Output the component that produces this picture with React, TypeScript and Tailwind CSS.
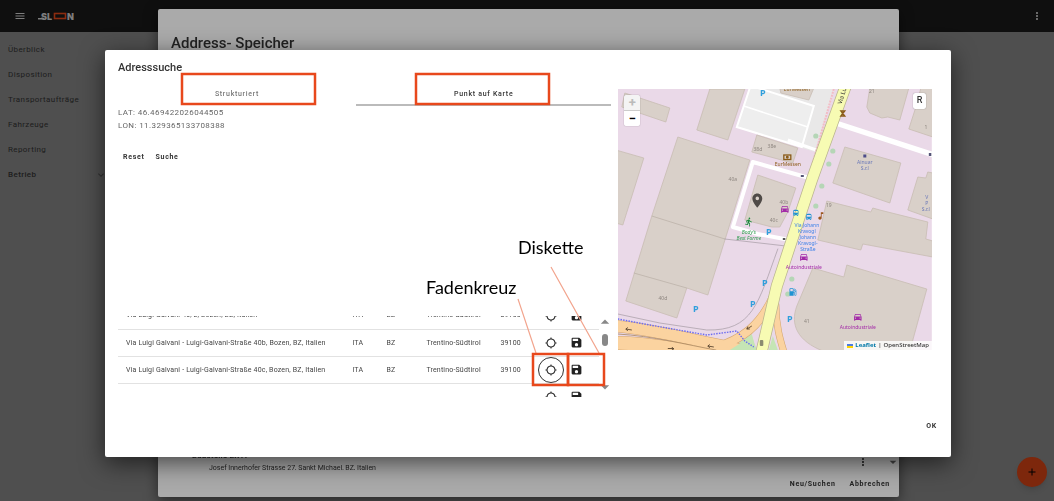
import React, { useState } from 'react'
import {
  MdAdd,
  MdArrowDropDown,
  MdArrowDropUp,
  MdDirectionsBus,
  MdDirectionsCar,
  MdDirectionsRun,
  MdExpandMore,
  MdLocalGasStation,
  MdLocationOn,
  MdLocationSearching,
  MdMenu,
  MdMoreVert,
  MdMusicNote,
  MdSave,
} from 'react-icons/md'

interface Address {
  id: number
  label: string
  country: string
  province: string
  region: string
  zip: string
}

const navItems = ['Überblick', 'Disposition', 'Transportaufträge', 'Fahrzeuge', 'Reporting', 'Betrieb']

const addresses: Address[] = [
  { id: 1, label: 'Via Luigi Galvani 40/b, Bozen, BZ, Italien', country: 'ITA', province: 'BZ', region: 'Trentino-Südtirol', zip: '39100' },
  { id: 2, label: 'Via Luigi Galvani - Luigi-Galvani-Straße 40b, Bozen, BZ, Italien', country: 'ITA', province: 'BZ', region: 'Trentino-Südtirol', zip: '39100' },
  { id: 3, label: 'Via Luigi Galvani - Luigi-Galvani-Straße 40c, Bozen, BZ, Italien', country: 'ITA', province: 'BZ', region: 'Trentino-Südtirol', zip: '39100' },
  { id: 4, label: '', country: '', province: '', region: '', zip: '' },
]

const buildings = [
  '7,4 52,19 48,33 4,18',
  '92,0 79,41 110,51 127,0',
  '60,48 132,71 90,206 69,199 59,229 8,212 34,127',
  '-2,61 26,69 5,136 -2,134',
  '162,-1 196,-1 191,11 163,4',
  '139,46 180,59 175,74 134,63',
  '140,86 178,99 170,123 162,138 154,138 127,131',
  '252,-1 249,18 252,24 264,29 270,28 282,31 291,-1',
  '303,-1 299,15 291,40 315,48 315,-1',
  '227,58 283,74 272,114 215,94',
  '300,88 308,89 310,83 315,84 315,130 290,121',
  '209,112 253,123 255,119 262,121 310,133 308,150 315,152 315,168 245,155 243,161 200,151',
]

const trees = [[198, 47], [215, 62], [211, 75], [204, 97], [198, 117], [174, 190], [170, 205]]
const parkings = [[145, 4], [151, 143], [147, 194], [135, 215], [78, 220], [172, 230]]

const houseNumbers: [number, number, string][] = [
  [140, 62, '38d'],
  [154, 59, '38e'],
  [115, 92, '40a'],
  [166, 115, '40b'],
  [156, 133, '40c'],
  [45, 211, '40d'],
  [211, 118, '19'],
  [189, 234, '41'],
  [308, 40, '1'],
  [254, 4, '21'],
]

const StreetMap: React.FC = () => (
  <svg
    viewBox="0 0 314 261"
    preserveAspectRatio="xMidYMid slice"
    className="block h-full w-full font-['Noto_Sans',sans-serif]"
    textAnchor="middle"
    fontSize="5"
  >
    <rect width="314" height="261" fill="#ead9e8" />
    <polygon points="131,0 217,0 197,63 118,38" fill="#e9e8e8" />
    <polygon points="133,-4 119,38 184,58 196,17 137,-2" fill="#eeeeee" stroke="#fff" strokeWidth="2" />
    <path d="M126 17 190 38" stroke="#fff" strokeWidth="1.5" />

    {/* Buildings */}
    {buildings.map((points) => (
      <polygon key={points} points={points} fill="#d9d0c9" stroke="#c8bcb3" strokeWidth="0.8" />
    ))}
    <path
      d="M195 179 226 188 229 176 309 200 292 262H205C180 252 172 236 179 217Z"
      fill="#d9d0c9"
      stroke="#c8bcb3"
      strokeWidth="0.8"
    />
    <path d="M34 127 107 150M16 184 69 199" stroke="#bdb2aa" strokeWidth="0.8" />

    {/* Green areas and the main road in the south */}
    <path d="M110 261 134 245 138 261ZM151 261 155 247 160 261Z" fill="#c5e5b5" />
    <g fill="none" strokeLinecap="round">
      <path d="M-4 237C35 240 70 250 101 256S140 266 150 275" stroke="#d3a56e" strokeWidth="12" />
      <path d="M-4 254C30 254 70 262 120 270" stroke="#d3a56e" strokeWidth="14" />
      <path d="M97 259C124 250 142 238 156 207" stroke="#d3a56e" strokeWidth="9" />
      <path d="M158 216C158 236 162 250 167 266" stroke="#d3a56e" strokeWidth="7" />
      <path d="M-4 237C35 240 70 250 101 256S140 266 150 275" stroke="#fbd3a0" strokeWidth="11" />
      <path d="M-4 254C30 254 70 262 120 270" stroke="#fbd3a0" strokeWidth="13" />
      <path d="M97 259C124 250 142 238 156 207" stroke="#fbd3a0" strokeWidth="8" />
      <path d="M158 216C158 236 162 250 167 266" stroke="#fbd3a0" strokeWidth="6" />
      <path d="M0 245C35 247 70 256 98 261" stroke="#a88760" strokeWidth="0.8" />
      <path d="M0 225 42 234 89 241C135 242 140 215 160 160M107 150 168 157" stroke="#a59ba3" strokeWidth="0.7" />
      <path d="M167 180 158 205" stroke="#a59ba3" strokeWidth="0.7" />
    </g>
    <path d="M112 261 134 247 139 261Z" fill="#c5e5b5" />
    <path d="M0 230 32 236 89 246 119 242 127 252 136 258" fill="none" stroke="#6c6cf0" strokeWidth="1.4" strokeDasharray="1.5 1.2" />

    {/* Side streets */}
    <g fill="none" stroke="#fff" strokeLinejoin="round">
      <path d="M170 51 204 63" strokeWidth="3" />
      <path d="M195 90 135 73 115 138 140 145 172 151" strokeWidth="4" />
      <path d="M218 34 316 66" strokeWidth="5.5" />
    </g>

    {/* Via Luigi Galvani */}
    <path d="M216 0 192 84" stroke="#f3bcc5" strokeWidth="2" strokeDasharray="2 1" />
    <path d="M229 -6C213 38 204 63 194 91L181 130 159 197 143 266" fill="none" stroke="#b9b58e" strokeWidth="12" />
    <path d="M229 -6C213 38 204 63 194 91L181 130 159 197 143 266" fill="none" stroke="#f7fbb3" strokeWidth="10.5" />

    {trees.map(([x, y]) => (
      <circle key={`${x}-${y}`} cx={x} cy={y} r="2.6" fill="#b5d6b6" />
    ))}
    {parkings.map(([x, y]) => (
      <text key={`${x}-${y}`} x={x} y={y + 3} fontSize="9" fontWeight="700" fill="#2f9fdc">P</text>
    ))}
    <g fill="#8d857f">
      {houseNumbers.map(([x, y, label]) => (
        <text key={label} x={x} y={y}>{label}</text>
      ))}
    </g>

    {/* Road arrows */}
    <g fill="none" stroke="#5a4630" strokeWidth="0.9">
      <path d="M14 241 8 240M10 238.500 8 240 10 242" />
      <path d="M50 259.500H56M54 258 56 260 54 261" />
      <path d="M96 258 90 257M92 255.500 90 257 92 259" />
      <path d="M134 237 129 240M130 237.500 129 240 132 240" />
    </g>
    <rect x="183" y="86" width="3" height="2" fill="#555577" />
    <rect x="165" y="149" width="2.500" height="2" fill="#555" />
    <rect x="311" y="64" width="2.500" height="3" fill="#555577" />
    <rect x="142" y="251" width="3.500" height="6" rx="1" fill="#8b8b70" />

    {/* Points of interest */}
    <g fill="none" stroke="#8a5a16" strokeWidth="1.3">
      <rect x="166" y="66" width="7" height="4.500" />
      <circle cx="169.500" cy="68.200" r="0.8" />
      <path d="M223 22H227L223 27H227Z" />
    </g>
    <text x="170" y="77" fill="#8a5a16">EurMessen</text>
    <text x="179" y="2" fill="#8a5a16">EurMessen</text>
    <rect x="245.500" y="65.500" width="3" height="3" fill="#4c4c8a" />
    <g fill="#6a78b8">
      <text x="247" y="75">Ainuar</text>
      <text x="247" y="81">S.r.l</text>
      <text x="309" y="110">V</text>
      <text x="309" y="116">P</text>
      <text x="308" y="122">S.r.l</text>
    </g>
    <text transform="translate(222 14) rotate(-72)" textAnchor="start" x="-1" y="2" fontSize="6" fill="#333">Via Lu</text>
    <g fill="#3f82e8">
      <text x="189" y="138">Via Johann</text>
      <text x="189" y="144">Kravogl</text>
      <text x="190" y="150">Johann</text>
      <text x="190" y="156">Kravogl-</text>
      <text x="190" y="162">Straße</text>
    </g>
    <g fill="#2d9a4d" fontStyle="italic">
      <text x="131" y="145">Body’s</text>
      <text x="131" y="151">Best Forme</text>
    </g>
    <g fill="#a32aa8">
      <text x="186" y="180">Autoindustriale</text>
      <text x="240" y="240">Autoindustriale</text>
    </g>
    <MdDirectionsCar x={181} y={163} size={10} color="#a32aa8" />
    <MdDirectionsCar x={235} y={223} size={10} color="#a32aa8" />
    <MdDirectionsCar x={162} y={115} size={10} color="#a32aa8" />
    <MdDirectionsBus x={174} y={120} size={8} color="#1f93d2" />
    <MdDirectionsBus x={187} y={124} size={8} color="#1f93d2" />
    <MdLocalGasStation x={170} y={198} size={10} color="#1f93d2" />
    <MdMusicNote x={198} y={122} size={10} color="#9a571a" />
    <MdDirectionsRun x={126} y={128} size={10} color="#1c8b3c" />
    <MdLocationOn x={131} y={103} size={17} color="#4f4a47" />
  </svg>
)

const Logo: React.FC = () => (
  <svg viewBox="0 0 38 10" className="h-[10px] w-[38px] font-[Inter,sans-serif]" fontSize="9" fontWeight="900" fill="#7d7d7d">
    <path d="M0 7H6V8.500H0Z" />
    <text x="3" y="8.500">SL</text>
    <rect x="16.500" y="2.500" width="11" height="5" fill="none" stroke="#8c2c10" strokeWidth="1.600" />
    <text x="29" y="8.500">N</text>
  </svg>
)

const App: React.FC = () => {
  const [activeTab, setActiveTab] = useState<'structured' | 'map'>('map')
  const [selectedId, setSelectedId] = useState(3)

  const tabClass = (tab: 'structured' | 'map') =>
    activeTab === tab ? 'border-[#bbbbbb] text-[#333]' : 'border-transparent text-[#777]'

  return (
    <div className="flex min-h-screen flex-col bg-[#4f4f4f] font-[Roboto,sans-serif]">
      {/* Header */}
      <header className="flex h-8 items-center gap-3 bg-[#0f0f0f] px-[14px] text-[#7d7d7d]">
        <button aria-label="Menü">
          <MdMenu className="size-3" />
        </button>
        <Logo />
        <button className="ml-auto -mr-[3px]" aria-label="Mehr">
          <MdMoreVert className="size-3" />
        </button>
      </header>

      {/* Sidebar */}
      <nav className="flex w-[107px] flex-col pt-[5px] text-[8px] tracking-wider text-[#1c1c1c]">
        {navItems.map((item) => (
          <a key={item} href="#" className={`flex h-[25px] items-center justify-between pl-2 ${item === 'Betrieb' ? 'font-medium' : ''}`}>
            {item}
            {item === 'Betrieb' && <MdExpandMore className="size-3 text-[#333]" />}
          </a>
        ))}
      </nav>

      <button className="fixed right-[7px] bottom-[14px] flex size-[30px] items-center justify-center rounded-full bg-[#7d270c] text-black shadow-md" aria-label="Hinzufügen">
        <MdAdd className="size-3" />
      </button>

      {/* Address store */}
      <div className="fixed inset-0 flex pt-[9px] pr-[155px] pb-1 pl-[158px]">
        <section className="flex flex-1 flex-col rounded-[2px] bg-[#aaaaaa] text-[#222] shadow-[0_4px_14px_rgba(0,0,0,0.5)]">
          <h1 className="px-[13px] pt-6 text-[15px] leading-5 font-medium">Address- Speicher</h1>
          <div className="mt-auto flex items-end justify-between pl-[34px]">
            <div>
              <p className="text-[8px] leading-3 font-bold tracking-wide">Baustelle EXTI</p>
              <p className="h-2 overflow-hidden pl-[17px] text-[7px] leading-3">
                Josef Innerhofer Strasse 27, Sankt Michael, BZ, Italien
              </p>
            </div>
            <div className="-mr-[2px] flex items-center gap-4">
              <MdMoreVert className="size-3" />
              <MdArrowDropDown className="size-4 text-[#444]" />
            </div>
          </div>
          <div className="flex justify-end gap-[14px] px-[9px] pt-2 pb-[7px] text-[7px] leading-3 font-bold tracking-widest">
            <button>Neu/Suchen</button>
            <button>Abbrechen</button>
          </div>
        </section>
      </div>

      {/* Address search */}
      <div className="fixed inset-0 flex pt-[50px] pr-[103px] pb-11 pl-[105px]">
        <section role="dialog" className="relative flex flex-1 flex-col rounded-[2px] bg-white shadow-[0_6px_24px_rgba(0,0,0,0.6)]">
          <h2 className="px-[13px] pt-[10px] text-[11px] leading-4 font-medium text-[#333]">Adresssuche</h2>

          <div className="mt-2 grid grid-cols-[494fr_314fr] gap-[7px] pr-[19px] pl-[13px]">
            <div className="flex flex-col">
              <div className="flex text-[7px] leading-5 font-medium tracking-widest">
                <button onClick={() => setActiveTab('structured')} className={`w-[238px] border-b-2 ${tabClass('structured')}`}>
                  Strukturiert
                </button>
                <button onClick={() => setActiveTab('map')} className={`flex-1 border-b-2 ${tabClass('map')}`}>
                  Punkt auf Karte
                </button>
              </div>
              <div className="text-[8px] leading-[13px] tracking-wider text-[#666]">
                <p>LAT: 46.469422026044505</p>
                <p>LON: 11.329365133708388</p>
              </div>
              <div className="mt-[17px] flex gap-[11px] pl-[5px] text-[7px] leading-4 font-bold tracking-widest text-[#333]">
                <button>Reset</button>
                <button>Suche</button>
              </div>

              {/* Results, scrolled to the middle of the list */}
              <div className="mt-[151px] flex h-[81px]">
                <div className="flex flex-1 items-center overflow-hidden">
                  <table className="w-full table-fixed text-[7px] tracking-wide text-[#444]">
                    <colgroup>
                      <col />
                      <col className="w-[34px]" />
                      <col className="w-10" />
                      <col className="w-[74px]" />
                      <col className="w-[38px]" />
                      <col className="w-[29px]" />
                      <col className="w-8" />
                    </colgroup>
                    <tbody>
                      {addresses.map((address) => (
                        <tr key={address.id} className="h-[27px] border-b border-[#e2e2e2] whitespace-nowrap">
                          <td className="pl-2">{address.label}</td>
                          <td>{address.country}</td>
                          <td>{address.province}</td>
                          <td>{address.region}</td>
                          <td>{address.zip}</td>
                          <td>
                            <button
                              aria-label="Position anzeigen"
                              onClick={() => setSelectedId(address.id)}
                              className={`flex size-[26px] items-center justify-center rounded-full border text-[#222] ${
                                selectedId === address.id ? 'border-[#333]' : 'border-transparent'
                              }`}
                            >
                              <MdLocationSearching className="size-3" />
                            </button>
                          </td>
                          <td>
                            <button aria-label="Speichern" className="flex pl-[3px] text-[#222]">
                              <MdSave className="size-[13px]" />
                            </button>
                          </td>
                        </tr>
                      ))}
                    </tbody>
                  </table>
                </div>
                <div className="flex w-3 flex-col items-center text-[#888]">
                  <MdArrowDropUp className="-mt-1 size-5 shrink-0" />
                  <span className="mt-[2px] h-3 w-[6px] rounded-full bg-[#888]" />
                  <MdArrowDropDown className="mt-auto size-5 shrink-0" />
                </div>
              </div>
            </div>

            {/* Map */}
            <div className="relative mt-[5px] h-[261px] overflow-hidden">
              <StreetMap />
              <div className="absolute top-[6px] left-[6px] flex w-4 flex-col overflow-hidden rounded-[2px] text-[13px] leading-[15px] font-bold shadow-[0_0_1px_rgba(0,0,0,0.5)]">
                <button className="h-4 border-b border-[#ccc] bg-[#f4f4f4] text-[#bbb]">+</button>
                <button className="h-[15px] bg-white text-black">−</button>
              </div>
              <button className="absolute top-1 right-[6px] h-4 w-[13px] rounded-[2px] bg-white text-[9px] font-medium text-[#333] shadow-[0_0_1px_rgba(0,0,0,0.5)]">
                R
              </button>
              <div className="absolute right-0 bottom-0 flex h-[9px] items-center gap-[2px] bg-white/80 px-[3px] font-['Noto_Sans',sans-serif] text-[6px] font-medium text-[#333]">
                <svg viewBox="0 0 6 4" className="h-1 w-[6px]">
                  <rect width="6" height="2" fill="#4c7be1" />
                  <rect y="2" width="6" height="2" fill="#ffd500" />
                </svg>
                <a href="#" className="font-bold text-[#0078a8]">Leaflet</a>
                <span>|</span>
                <span>OpenStreetMap</span>
              </div>
            </div>
          </div>

          <div className="mt-auto flex justify-end px-[14px] pb-[23px] text-[7px] leading-4 font-bold tracking-widest text-[#333]">
            <button>OK</button>
          </div>

          {/* Manual annotations */}
          <svg className="pointer-events-none absolute inset-0 h-full w-full" fill="none">
            <path d="M413 249 431 303M446 217 494 303" stroke="#f2a48d" strokeWidth="1.200" />
            <g stroke="#e8481c" strokeWidth="2.500">
              <rect x="77" y="24" width="133" height="30" />
              <rect x="311" y="24" width="133" height="30" />
              <rect x="428" y="304" width="35" height="31" />
              <rect x="463" y="304" width="36" height="31" />
            </g>
          </svg>
          <span className="absolute top-[225px] left-[321px] font-[Lato,sans-serif] text-[18px] leading-6 text-black">Fadenkreuz</span>
          <span className="absolute top-[185px] left-[413px] font-[Lato,sans-serif] text-[18px] leading-6 text-black">Diskette</span>
        </section>
      </div>
    </div>
  )
}

export default App
